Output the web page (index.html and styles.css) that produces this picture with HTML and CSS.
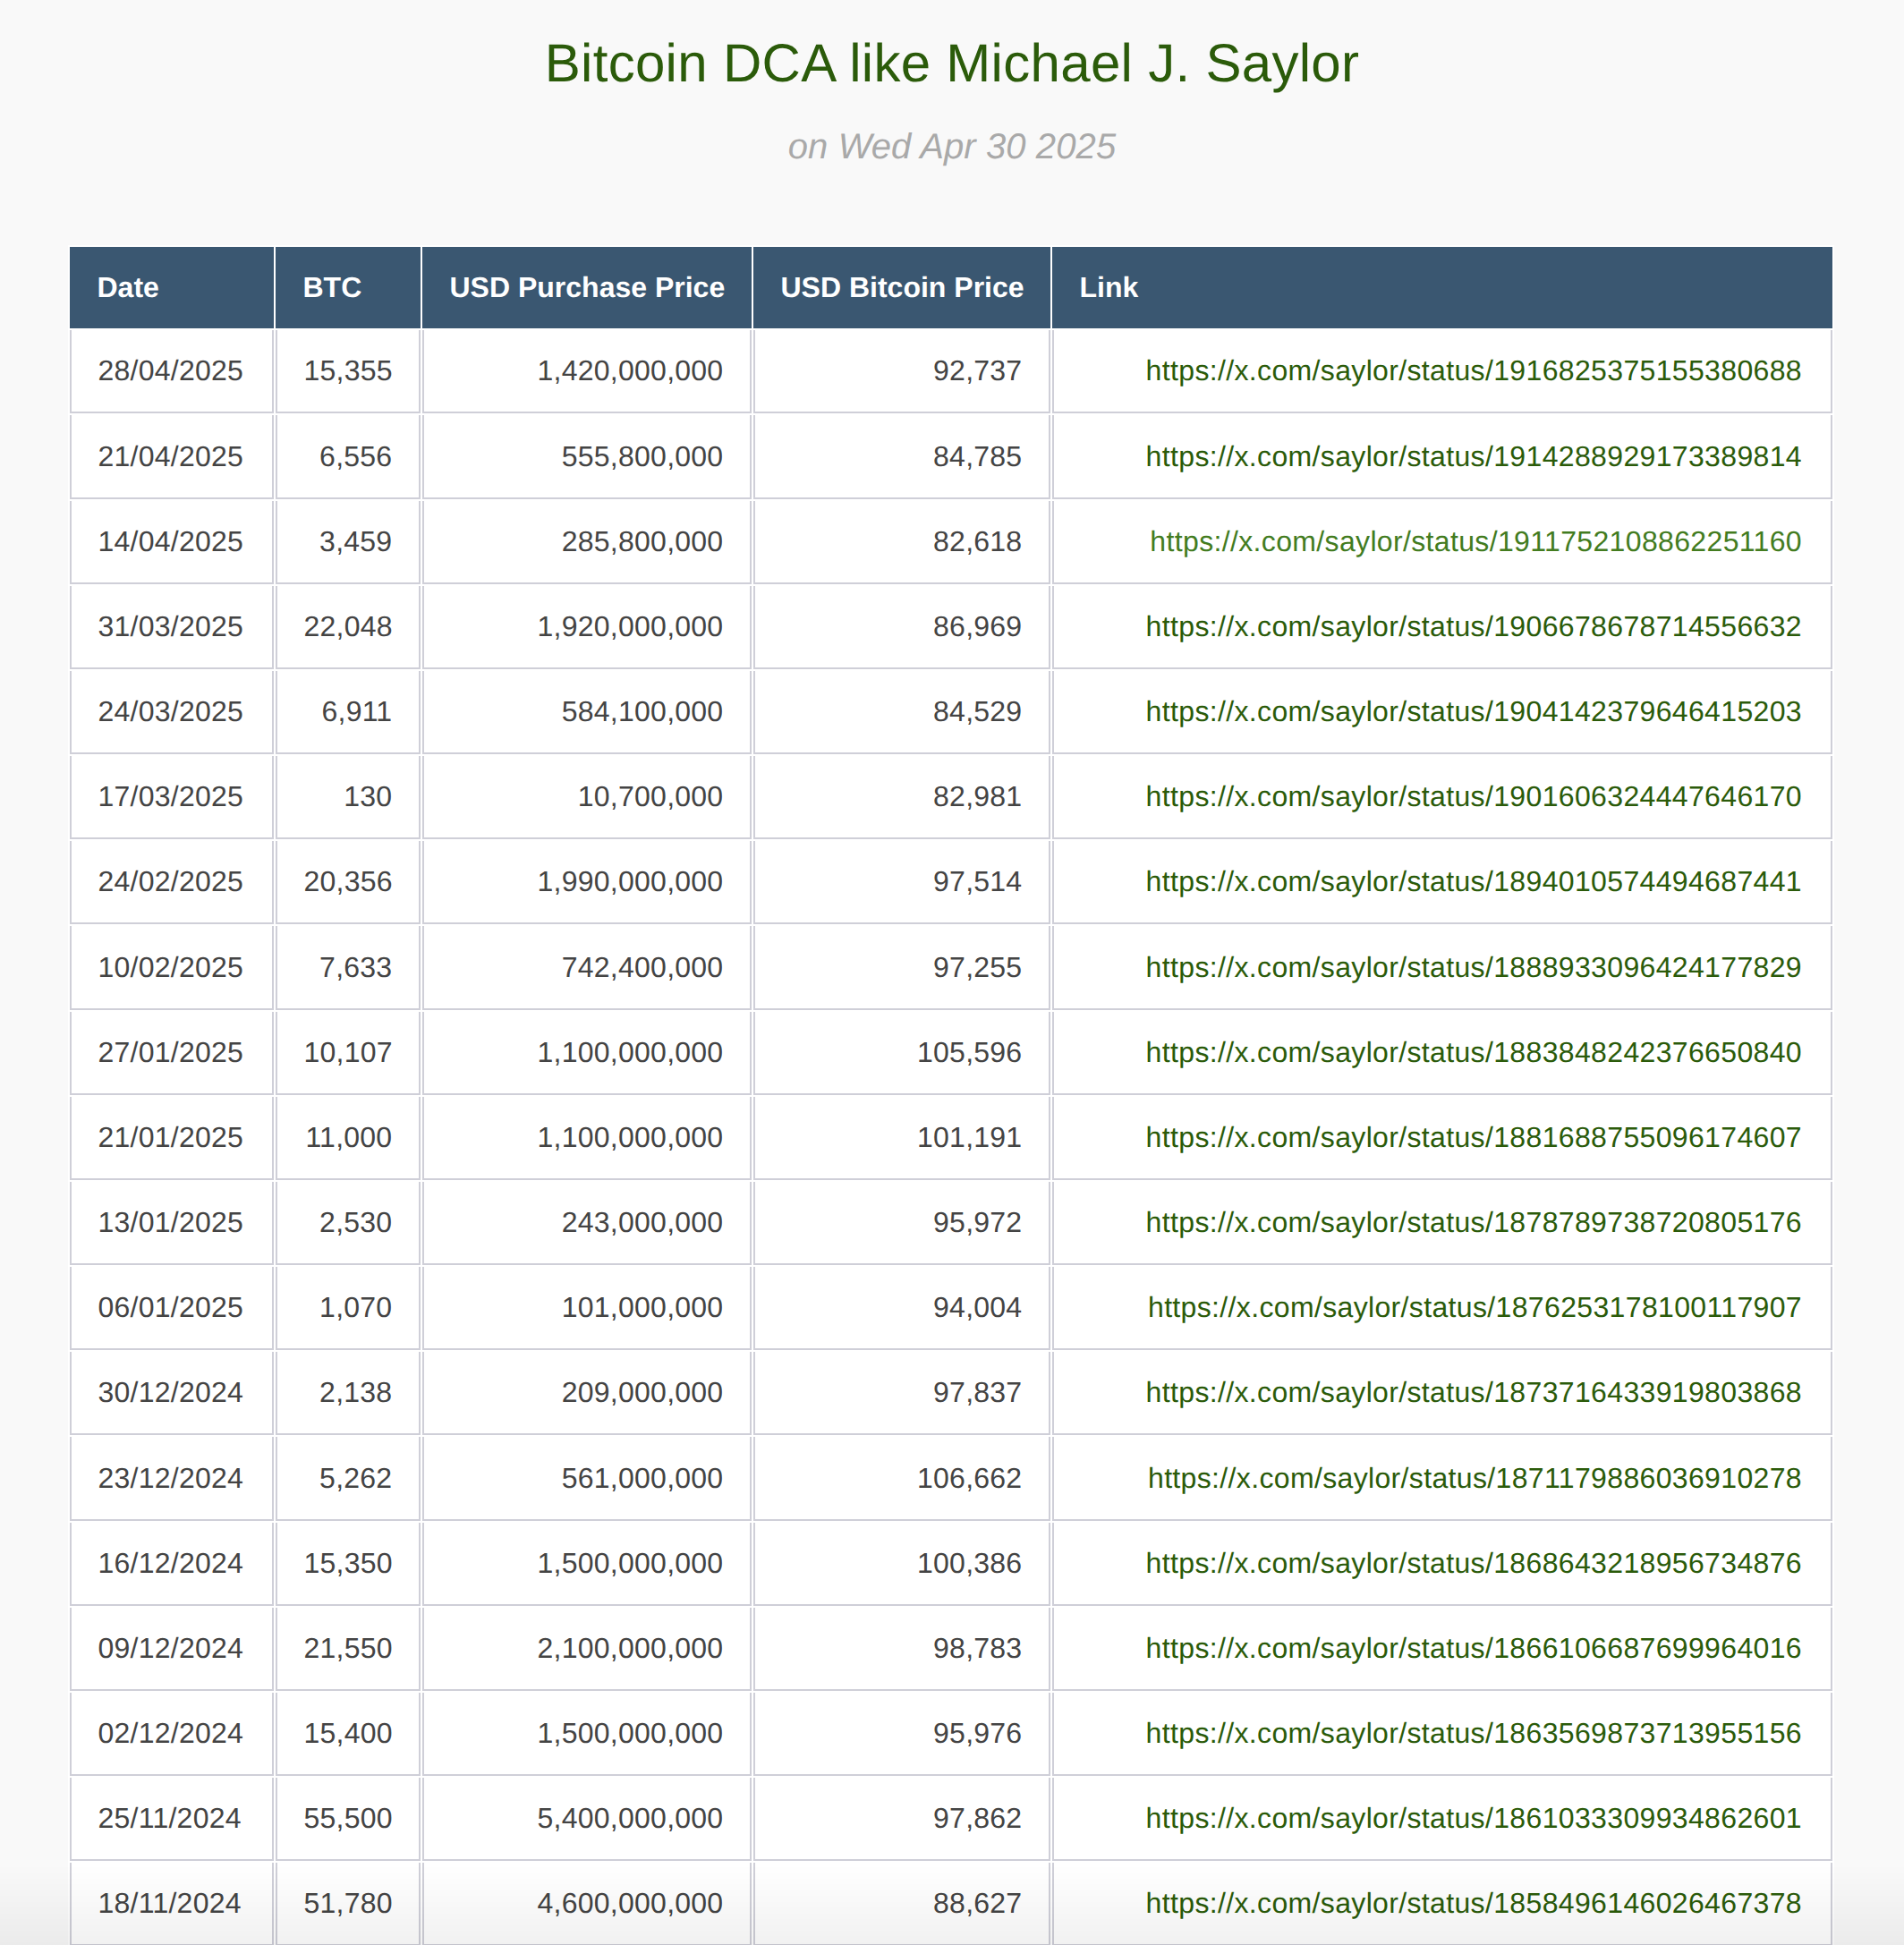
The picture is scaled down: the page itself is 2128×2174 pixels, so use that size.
FILE: index.html
```html
<!DOCTYPE html>
<html lang="en">
<head>
<meta charset="utf-8">
<title>Bitcoin DCA like Michael J. Saylor</title>
<link rel="stylesheet" href="styles.css">
</head>
<body>
<header class="page-head">
  <h1 class="title">Bitcoin DCA like Michael J. Saylor</h1>
  <p class="subtitle">on Wed Apr 30 2025</p>
</header>
<main class="table-wrap">
  <table class="dca">
    <thead>
      <tr>
        <th class="c-date">Date</th>
        <th class="c-btc">BTC</th>
        <th class="c-usd">USD Purchase Price</th>
        <th class="c-price">USD Bitcoin Price</th>
        <th class="c-link">Link</th>
      </tr>
    </thead>
    <tbody>
      <tr><td>28/04/2025</td><td class="num">15,355</td><td class="num">1,420,000,000</td><td class="num">92,737</td><td class="num link"><a href="#">https://x.com/saylor/status/1916825375155380688</a></td></tr>
      <tr><td>21/04/2025</td><td class="num">6,556</td><td class="num">555,800,000</td><td class="num">84,785</td><td class="num link"><a href="#">https://x.com/saylor/status/1914288929173389814</a></td></tr>
      <tr><td>14/04/2025</td><td class="num">3,459</td><td class="num">285,800,000</td><td class="num">82,618</td><td class="num link"><a href="#" class="hovered">https://x.com/saylor/status/1911752108862251160</a></td></tr>
      <tr><td>31/03/2025</td><td class="num">22,048</td><td class="num">1,920,000,000</td><td class="num">86,969</td><td class="num link"><a href="#">https://x.com/saylor/status/1906678678714556632</a></td></tr>
      <tr><td>24/03/2025</td><td class="num">6,911</td><td class="num">584,100,000</td><td class="num">84,529</td><td class="num link"><a href="#">https://x.com/saylor/status/1904142379646415203</a></td></tr>
      <tr><td>17/03/2025</td><td class="num">130</td><td class="num">10,700,000</td><td class="num">82,981</td><td class="num link"><a href="#">https://x.com/saylor/status/1901606324447646170</a></td></tr>
      <tr><td>24/02/2025</td><td class="num">20,356</td><td class="num">1,990,000,000</td><td class="num">97,514</td><td class="num link"><a href="#">https://x.com/saylor/status/1894010574494687441</a></td></tr>
      <tr><td>10/02/2025</td><td class="num">7,633</td><td class="num">742,400,000</td><td class="num">97,255</td><td class="num link"><a href="#">https://x.com/saylor/status/1888933096424177829</a></td></tr>
      <tr><td>27/01/2025</td><td class="num">10,107</td><td class="num">1,100,000,000</td><td class="num">105,596</td><td class="num link"><a href="#">https://x.com/saylor/status/1883848242376650840</a></td></tr>
      <tr><td>21/01/2025</td><td class="num">11,000</td><td class="num">1,100,000,000</td><td class="num">101,191</td><td class="num link"><a href="#">https://x.com/saylor/status/1881688755096174607</a></td></tr>
      <tr><td>13/01/2025</td><td class="num">2,530</td><td class="num">243,000,000</td><td class="num">95,972</td><td class="num link"><a href="#">https://x.com/saylor/status/1878789738720805176</a></td></tr>
      <tr><td>06/01/2025</td><td class="num">1,070</td><td class="num">101,000,000</td><td class="num">94,004</td><td class="num link"><a href="#">https://x.com/saylor/status/1876253178100117907</a></td></tr>
      <tr><td>30/12/2024</td><td class="num">2,138</td><td class="num">209,000,000</td><td class="num">97,837</td><td class="num link"><a href="#">https://x.com/saylor/status/1873716433919803868</a></td></tr>
      <tr><td>23/12/2024</td><td class="num">5,262</td><td class="num">561,000,000</td><td class="num">106,662</td><td class="num link"><a href="#">https://x.com/saylor/status/1871179886036910278</a></td></tr>
      <tr><td>16/12/2024</td><td class="num">15,350</td><td class="num">1,500,000,000</td><td class="num">100,386</td><td class="num link"><a href="#">https://x.com/saylor/status/1868643218956734876</a></td></tr>
      <tr><td>09/12/2024</td><td class="num">21,550</td><td class="num">2,100,000,000</td><td class="num">98,783</td><td class="num link"><a href="#">https://x.com/saylor/status/1866106687699964016</a></td></tr>
      <tr><td>02/12/2024</td><td class="num">15,400</td><td class="num">1,500,000,000</td><td class="num">95,976</td><td class="num link"><a href="#">https://x.com/saylor/status/1863569873713955156</a></td></tr>
      <tr><td>25/11/2024</td><td class="num">55,500</td><td class="num">5,400,000,000</td><td class="num">97,862</td><td class="num link"><a href="#">https://x.com/saylor/status/1861033309934862601</a></td></tr>
      <tr><td>18/11/2024</td><td class="num">51,780</td><td class="num">4,600,000,000</td><td class="num">88,627</td><td class="num link"><a href="#">https://x.com/saylor/status/1858496146026467378</a></td></tr>
    </tbody>
  </table>
</main>
<div class="bottom-fade"></div>
</body>
</html>
```
FILE: styles.css
```css
html, body {
  margin: 0;
  padding: 0;
}

body {
  background: #f9f9f9;
  font-family: "Liberation Sans", Arial, Helvetica, sans-serif;
  color: #444444;
  text-rendering: geometricPrecision;
}

.page-head {
  text-align: center;
  padding-top: 36px;
}

.title {
  margin: 0;
  font-size: 60px;
  line-height: 69px;
  font-weight: normal;
  color: #2b5b0a;
  letter-spacing: 0.3px;
}

.subtitle {
  margin: 36px 0 0;
  font-size: 40px;
  line-height: 46px;
  font-style: italic;
  color: #a9a9a9;
  letter-spacing: 0.1px;
}

.table-wrap {
  padding: 87px 78px 0 76px;
}

.dca {
  width: 100%;
  table-layout: fixed;
  border-collapse: separate;
  border-spacing: 2px;
  background: #ffffff;
}

.dca th {
  box-sizing: border-box;
  background: #3a5771;
  color: #ffffff;
  font-weight: bold;
  font-size: 32px;
  line-height: 36.8px;
  padding: 27.2px 29px 27.2px 30.5px;
  text-align: left;
}

.c-date { width: 228px; }
.c-btc { width: 162px; }
.c-usd { width: 368px; }
.c-price { width: 332px; }

.dca td {
  font-size: 32px;
  line-height: 36.8px;
  padding: 27.2px 29.6px 27.2px 29.5px;
  border-left: 2px solid #cfcfd8;
  border-right: 2px solid #cfcfd8;
  border-bottom: 2px solid #cfcfd8;
  background: #ffffff;
  color: #444444;
  letter-spacing: 0.25px;
  white-space: nowrap;
  text-align: left;
}

.dca td.num {
  text-align: right;
}

.dca td.link {
  padding-right: 32px;
}

.dca a {
  color: #2b5b0a;
  text-decoration: none;
  letter-spacing: 0.35px;
}

.dca a.hovered {
  color: #437c1f;
}

.bottom-fade {
  position: fixed;
  left: 0;
  right: 0;
  bottom: 0;
  height: 90px;
  pointer-events: none;
  background: linear-gradient(to bottom, rgba(0, 0, 0, 0), rgba(0, 0, 0, 0.055));
}
```
